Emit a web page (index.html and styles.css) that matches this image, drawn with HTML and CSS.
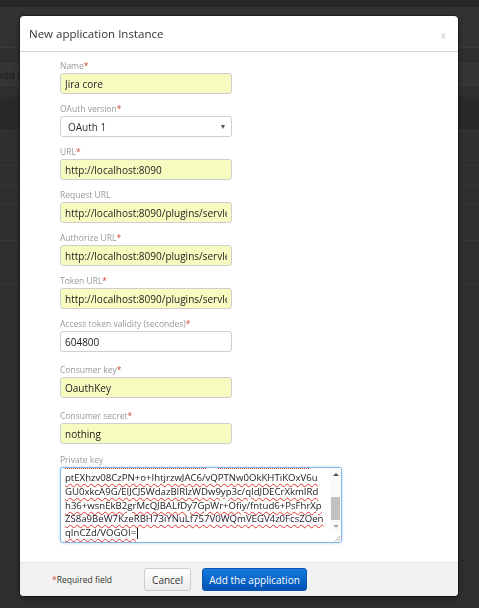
FILE: index.html
```html
<!DOCTYPE html>
<html>
<head>
<meta charset="utf-8">
<link rel="stylesheet" href="styles.css">
</head>
<body>
<div class="page">
  <div class="topbar"></div>
  <div class="pagehead"></div>
  <div class="subrow"></div>
  <div class="toolbar"><span class="ghost">Add a</span></div>
  <div class="gap"></div>
  <div class="band"></div>
  <div class="prow h35"></div>
  <div class="prow h20"></div>
  <div class="prow h18"></div>
  <div class="prow h37"></div>
  <div class="prow h43"></div>
</div>

<div class="overlay">
  <div class="modal">
    <div class="modal-head">
      <h2 class="title">New application Instance</h2>
      <span class="close">x</span>
    </div>
    <div class="modal-body">
      <div class="field">
        <label class="lbl">Name<span class="req">*</span></label>
        <input class="inp filled" value="Jira core">
      </div>
      <div class="field">
        <label class="lbl">OAuth version<span class="req">*</span></label>
        <div class="inp select"><span>OAuth 1</span><span class="caret"></span></div>
      </div>
      <div class="field">
        <label class="lbl">URL<span class="req">*</span></label>
        <input class="inp filled" value="http://localhost:8090">
      </div>
      <div class="field">
        <label class="lbl">Request URL</label>
        <input class="inp filled" value="http://localhost:8090/plugins/servlet/oauth/request-token">
      </div>
      <div class="field">
        <label class="lbl">Authorize URL<span class="req">*</span></label>
        <input class="inp filled" value="http://localhost:8090/plugins/servlet/oauth/authorize">
      </div>
      <div class="field">
        <label class="lbl">Token URL<span class="req">*</span></label>
        <input class="inp filled" value="http://localhost:8090/plugins/servlet/oauth/access-token">
      </div>
      <div class="field wide">
        <label class="lbl">Access token validity (secondes)<span class="req">*</span></label>
        <input class="inp" value="604800">
      </div>
      <div class="field wide">
        <label class="lbl">Consumer key<span class="req">*</span></label>
        <input class="inp filled" value="OauthKey">
      </div>
      <div class="field mid">
        <label class="lbl">Consumer secret<span class="req">*</span></label>
        <input class="inp filled" value="nothing">
      </div>
      <div class="field">
        <label class="lbl">Private key</label>
        <div class="ta">
          <div class="ta-text">
            <div class="ta-cut"><span class="squig s1"></span><span class="squig s2"></span></div>
            <div class="ta-line"><span class="sp">ptEXhzv08CzPN+o+IhtjrzwJAC6/vQPTNw0OkKHTiKOxV6u</span></div>
            <div class="ta-line"><span class="sp">GU0xkcA9G/EIJCJ5WdazBIRlzWDw9yp3c/qIdJDECrXkmIRd</span></div>
            <div class="ta-line"><span class="sp">h36+wsnEkB2grMcQJBALfDy7GpWr+Ofiy/fntud6+PsFhrXp</span></div>
            <div class="ta-line"><span class="sp">ZS8a9BeW7KzeRBH73iYNuLf757V0WQmVEGV4z0FcsZOen</span></div>
            <div class="ta-line"><span class="sp">qInCZd/VOGOI=</span><span class="cursor"></span></div>
          </div>
          <div class="sbar">
            <div class="sb-up"><span class="tri-up"></span></div>
            <div class="sb-track"><div class="sb-thumb"></div></div>
            <div class="sb-down"><span class="tri-down"></span></div>
            <div class="sb-corner">
              <svg width="7" height="7" viewBox="0 0 7 7"><path d="M1 6.5L6.5 1M4 6.5L6.5 4" stroke="#9a9a9a" stroke-width="0.9"/></svg>
            </div>
          </div>
        </div>
      </div>
    </div>
    <div class="modal-foot">
      <span class="reqnote"><span class="req">*</span>Required field</span>
      <button class="btn cancel" type="button">Cancel</button>
      <button class="btn primary" type="button">Add the application</button>
    </div>
  </div>
</div>
</body>
</html>
```

FILE: styles.css
```css
html, body {
  margin: 0;
  padding: 0;
}
body {
  background: #2f2f2f;
  font-family: "Open Sans", "Noto Sans", sans-serif;
  height: 608px;
  overflow: hidden;
}

/* dimmed page behind the dialog */
.page {
  display: flex;
  flex-direction: column;
}
.topbar {
  height: 7px;
  background: #272727;
}
.pagehead {
  height: 40px;
  background: #323232;
  border-bottom: 1px solid #3b3b3b;
}
.subrow {
  height: 15px;
  background: #2f2f2f;
  border-bottom: 1px solid #393939;
}
.toolbar {
  height: 21px;
  background: #343434;
  border-bottom: 1px solid #393939;
  display: flex;
  align-items: center;
}
.ghost {
  margin-left: -4px;
  font-size: 10px;
  color: #1c1c1c;
  white-space: nowrap;
}
.gap {
  height: 11px;
}
.band {
  height: 33px;
  background: #292929;
  border-bottom: 1px solid #363636;
}
.prow {
  border-bottom: 1px solid #363636;
}
.h35 { height: 34px; }
.h20 { height: 19px; }
.h18 { height: 17px; }
.h37 { height: 36px; }
.h43 { height: 42px; }

/* dialog */
.overlay {
  position: fixed;
  inset: 0;
  padding: 16px 21px 12px 20px;
  display: flex;
}
.modal {
  flex: 1;
  background: #fff;
  border-radius: 4px;
  display: flex;
  flex-direction: column;
  overflow: hidden;
  box-shadow: 0 0 0 1px rgba(0, 0, 0, 0.35), 0 2px 6px rgba(0, 0, 0, 0.4);
}
.modal-head {
  height: 35px;
  flex: none;
  border-bottom: 1px solid #d6d6d6;
  display: flex;
  align-items: center;
  justify-content: space-between;
  padding: 0 12px 0 9px;
}
.title {
  margin: 0;
  font-size: 11.5px;
  font-weight: 400;
  color: #333;
}
.close {
  font-size: 10px;
  color: #c8c8c8;
  padding-top: 3px;
}
.modal-body {
  flex: 1;
  padding: 9px 0 0 40px;
}
.field {
  display: flex;
  flex-direction: column;
  align-items: flex-start;
  gap: 2px;
  margin-bottom: 10px;
}
.field.wide {
  margin-bottom: 13px;
}
.field.mid {
  margin-bottom: 11px;
}
.lbl {
  font-size: 8.5px;
  line-height: 10px;
  color: #999;
}
.req {
  color: #d04437;
}
.inp {
  width: 172px;
  height: 21px;
  box-sizing: border-box;
  border: 1px solid #cfcfcf;
  border-radius: 3px;
  padding: 0 4px;
  margin: 0;
  font-family: "Open Sans", "Noto Sans", sans-serif;
  font-size: 10px;
  color: #222;
  background: #fff;
  outline: none;
}
.inp.filled {
  background: #f8fbc0;
}
.select {
  display: flex;
  align-items: center;
  justify-content: space-between;
  padding: 0 6px 0 7px;
  color: #333;
}
.caret {
  width: 0;
  height: 0;
  border-left: 2.5px solid transparent;
  border-right: 2.5px solid transparent;
  border-top: 4px solid #555;
}

/* private key textarea */
.ta {
  width: 282px;
  height: 76px;
  box-sizing: border-box;
  border: 1px solid #86b6e6;
  border-radius: 3px;
  box-shadow: 0 0 3px rgba(82, 150, 230, 0.45);
  display: flex;
  overflow: hidden;
  background: #fff;
}
.ta-text {
  flex: 1;
  overflow: hidden;
  padding-left: 4px;
  font-size: 9.6px;
  line-height: 13.8px;
  color: #222;
}
.ta-cut {
  height: 3px;
  display: flex;
  align-items: flex-start;
  gap: 11px;
}
.squig {
  height: 1px;
  margin-top: 0;
  background: repeating-linear-gradient(90deg, #e0352b 0 1px, transparent 1px 2px);
}
.s1 { width: 142px; }
.s2 { width: 92px; }
.ta-line {
  white-space: nowrap;
  display: flex;
  align-items: center;
}
.sp {
  text-decoration: underline wavy #e0352b;
  text-decoration-thickness: 1px;
  text-underline-offset: 2px;
}
.cursor {
  display: inline-block;
  width: 0;
  height: 11px;
  border-left: 1px solid #111;
  margin-left: 1px;
}
.sbar {
  width: 11px;
  flex: none;
  display: flex;
  flex-direction: column;
  background: #fafafa;
}
.sb-up,
.sb-down {
  display: flex;
  justify-content: center;
  align-items: center;
}
.sb-up {
  height: 12px;
}
.sb-down {
  height: 10px;
}
.tri-up {
  width: 0;
  height: 0;
  border-left: 3px solid transparent;
  border-right: 3px solid transparent;
  border-bottom: 3px solid #505050;
}
.tri-down {
  width: 0;
  height: 0;
  border-left: 3px solid transparent;
  border-right: 3px solid transparent;
  border-top: 3px solid #a8a8a8;
}
.sb-track {
  flex: 1;
  padding-top: 17px;
  display: flex;
  justify-content: center;
}
.sb-thumb {
  width: 9px;
  height: 23px;
  background: #c1c1c1;
}
.sb-corner {
  height: 11px;
  display: flex;
  justify-content: flex-end;
  align-items: flex-end;
  background: #fff;
}
.sb-corner svg {
  display: block;
}

/* footer */
.modal-foot {
  height: 34px;
  flex: none;
  box-sizing: border-box;
  background: #f2f2f2;
  border-top: 1px solid #e4e4e4;
  display: flex;
  align-items: center;
  padding-left: 32px;
}
.reqnote {
  font-size: 8.5px;
  color: #333;
  margin-right: 32px;
}
.btn {
  height: 23px;
  box-sizing: border-box;
  border-radius: 3px;
  font-family: "Open Sans", "Noto Sans", sans-serif;
  font-size: 10px;
  padding: 0;
  margin: 0;
  cursor: pointer;
}
.cancel {
  width: 47px;
  background: linear-gradient(#ffffff, #ebebeb);
  border: 1px solid #cccccc;
  color: #333;
}
.primary {
  width: 105px;
  margin-left: 11px;
  background: linear-gradient(#1479df, #0152b4);
  border: 1px solid #0a55b0;
  color: #fff;
}
```
